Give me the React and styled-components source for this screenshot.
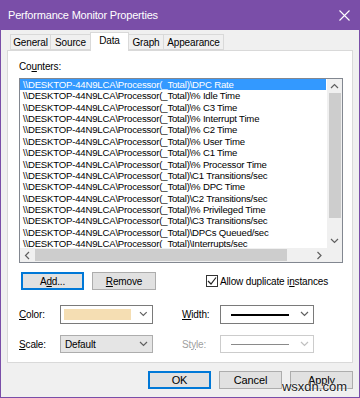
import React from 'react';
import styled, { createGlobalStyle } from 'styled-components';

const Global = createGlobalStyle`
    html, body { margin: 0; padding: 0; background: #f0f0f0; }
    * { box-sizing: border-box; }
`

const FONT = `"Liberation Sans", Arial, sans-serif`;

const Window = styled.div`
    position: relative;
    width: 360px;
    height: 398px;
    background: #f0f0f0;
    border: 1px solid #7a4ea8;
    border-top: none;
    font-family: ${FONT};
    font-size: 10px;
    letter-spacing: -0.15px;
    color: #000;
    display: flex;
    flex-direction: column;
`

const TitleBar = styled.div`
    height: 30px;
    margin: 0 -1px;
    background: #7a4ea8;
    color: #fff;
    display: flex;
    align-items: center;
    justify-content: space-between;
    padding: 0 8px 0 8px;
    font-size: 11px;
    letter-spacing: -0.2px;
`

const Close = styled.svg`
    width: 11px;
    height: 11px;
    margin-right: 2px;
`

const Tabs = styled.div`
    display: flex;
    align-items: flex-end;
    height: 20px;
    padding-left: 10px;
    position: relative;
    z-index: 1;
`

const Tab = styled.div`
    width: ${p => p.$w}px;
    height: ${p => (p.$active ? '19px' : '16px')};
    margin-bottom: ${p => (p.$active ? '-1px' : '0')};
    background: ${p => (p.$active ? '#fff' : '#f0f0f0')};
    border: 1px solid #d9d9d9;
    border-bottom: ${p => (p.$active ? 'none' : '1px solid #d9d9d9')};
    margin-left: -1px;
    display: flex;
    justify-content: center;
    align-items: ${p => (p.$active ? 'flex-start' : 'center')};
    padding-top: ${p => (p.$active ? '2px' : '0')};
    color: #000;
`

const Panel = styled.div`
    margin: 0 6px;
    height: 313px;
    background: #fff;
    border: 1px solid #d9d9d9;
    padding: 9px 9px 0 11px;
    display: flex;
    flex-direction: column;
`

const Label = styled.div`
    height: 13px;
    line-height: 13px;
    white-space: nowrap;
    color: ${p => (p.$disabled ? '#a0a0a0' : '#000')};
    u { text-decoration: underline; }
`

const ListBox = styled.div`
    margin-top: 5px;
    width: 324px;
    height: 185px;
    border: 1px solid #828790;
    display: grid;
    grid-template-columns: 1fr 15px;
    grid-template-rows: 1fr 14px;
    overflow: hidden;
`

const Rows = styled.div`
    overflow: hidden;
    min-height: 0;
`

const Row = styled.div`
    height: 11.36px;
    line-height: 11.36px;
    padding-left: 3px;
    white-space: nowrap;
    font-size: 9.6px;
    letter-spacing: -0.2px;
    background: ${p => (p.$selected ? '#3399ff' : 'transparent')};
    color: ${p => (p.$selected ? '#fff' : '#000')};
    margin-right: 1px;
`

const VScroll = styled.div`
    background: #f0f0f0;
    display: flex;
    flex-direction: column;
    align-items: center;
    min-height: 0;
`

const Arrow = styled.div`
    height: 14px;
    width: ${p => p.$w || 15}px;
    flex: none;
    display: flex;
    align-items: center;
    justify-content: center;
`

const VThumb = styled.div`
    width: 12px;
    height: 125px;
    background: #cdcdcd;
`

const HScroll = styled.div`
    background: #f0f0f0;
    display: flex;
    align-items: center;
`

const HThumb = styled.div`
    height: 12px;
    width: 252px;
    background: #cdcdcd;
`

const Spacer = styled.div`
    flex: 1;
`

const Corner = styled.div`
    background: #f0f0f0;
`

const ButtonRow = styled.div`
    margin-top: 9px;
    display: flex;
    align-items: center;
    height: 18px;
`

const Button = styled.div`
    width: ${p => p.$w || 64}px;
    height: ${p => p.$h || 18}px;
    margin-left: ${p => p.$ml || 0}px;
    background: #e1e1e1;
    border: 1px solid ${p => (p.$default ? '#0078d7' : '#adadad')};
    box-shadow: ${p => (p.$default ? 'inset 0 0 0 1px #0078d7' : 'none')};
    display: flex;
    align-items: center;
    justify-content: center;
    color: #000;
    font-size: ${p => p.$fs || 10}px;
`

const Check = styled.div`
    margin-left: 50px;
    display: flex;
    align-items: center;
    gap: 2px;
    white-space: nowrap;
`

const Box = styled.div`
    width: 12px;
    height: 12px;
    border: 1px solid #333;
    background: #fff;
    display: flex;
    align-items: center;
    justify-content: center;
`

const Grid = styled.div`
    margin-top: 15px;
    display: grid;
    grid-template-columns: 41px 93px 29px 38px 94px;
    grid-template-rows: 19px 18px;
    row-gap: 11px;
    align-items: center;
`

const Combo = styled.div`
    height: 100%;
    border: 1px solid ${p => (p.$disabled ? '#cccccc' : p.$flat ? '#adadad' : '#7a7a7a')};
    background: ${p => (p.$flat ? '#e5e5e5' : '#fff')};
    display: flex;
    align-items: center;
    padding-left: ${p => (p.$flat ? '4px' : '3px')};
    padding-right: 4px;
    gap: 4px;
`

const Swatch = styled.div`
    width: 70px;
    height: 11px;
    background: #f5deb3;
`

const LineSample = styled.div`
    flex: 1;
    display: flex;
    justify-content: center;
    div {
        width: 58px;
        height: ${p => (p.$thick ? '2px' : '1px')};
        background: ${p => (p.$disabled ? '#8a8a8a' : '#000')};
    }
`

const ComboText = styled.div`
    flex: 1;
    color: #000;
`

const Footer = styled.div`
    display: flex;
    justify-content: flex-end;
    gap: 8px;
    padding: 8px 6px 0 0;
`

const Watermark = styled.div`
    position: absolute;
    right: 12px;
    bottom: 3px;
    font-family: ${FONT};
    font-size: 13px;
    letter-spacing: 0;
    color: #222;
    text-shadow: 0 0 2px #fff, 0 0 2px #fff;
`

const Chevron = ({ dir = 'down', color = '#606060' }) => {
    const d = {
        down: 'M1 2 L4.5 5.5 L8 2',
        up: 'M1 6 L4.5 2.5 L8 6',
        left: 'M6 1 L2.5 4.5 L6 8',
        right: 'M2.5 1 L6 4.5 L2.5 8',
    }[dir];
    return (
        <svg width="9" height="9" viewBox="0 0 9 9">
            <path d={d} fill="none" stroke={color} strokeWidth="1.2" />
        </svg>
    );
};

const items = [
    'DPC Rate', '% Idle Time', '% C3 Time', '% Interrupt Time', '% C2 Time',
    '% User Time', '% C1 Time', '% Processor Time', 'C1 Transitions/sec',
    '% DPC Time', 'C2 Transitions/sec', '% Privileged Time', 'C3 Transitions/sec',
    'DPCs Queued/sec', 'Interrupts/sec',
];

const tabs = [['General', 41], ['Source', 41], ['Data', 39], ['Graph', 36], ['Appearance', 61]];

const App = () => {
    return (
        <>
            <Global />
            <Window>
                <TitleBar>
                    <span>Performance Monitor Properties</span>
                    <Close viewBox="0 0 11 11">
                        <path d="M0.5 0.5 L10.5 10.5 M10.5 0.5 L0.5 10.5" stroke="#fff" strokeWidth="1.1" />
                    </Close>
                </TitleBar>
                <Tabs>
                    {tabs.map(([t, w]) => (
                        <Tab key={t} $w={w} $active={t === 'Data'}>{t}</Tab>
                    ))}
                </Tabs>
                <Panel>
                    <Label>Co<u>u</u>nters:</Label>
                    <ListBox>
                        <Rows>
                            {items.map((it, i) => (
                                <Row key={it} $selected={i === 0}>
                                    {`\\\\DESKTOP-44N9LCA\\Processor(_Total)\\${it}`}
                                </Row>
                            ))}
                        </Rows>
                        <VScroll>
                            <Arrow><Chevron dir="up" /></Arrow>
                            <VThumb />
                            <Spacer />
                            <Arrow><Chevron dir="down" /></Arrow>
                        </VScroll>
                        <HScroll>
                            <Arrow><Chevron dir="left" /></Arrow>
                            <HThumb />
                            <Spacer />
                            <Arrow><Chevron dir="right" /></Arrow>
                        </HScroll>
                        <Corner />
                    </ListBox>
                    <ButtonRow>
                        <Button $default $w={63} $ml={2}>A<u>d</u>d...</Button>
                        <Button $w={64} $ml={8}><u>R</u>emove</Button>
                        <Check>
                            <Box>
                                <svg width="10" height="10" viewBox="0 0 10 10">
                                    <path d="M1 5 L4 8 L9 1.5" fill="none" stroke="#222" strokeWidth="1.2" />
                                </svg>
                            </Box>
                            <span>Allow duplicate i<u>n</u>stances</span>
                        </Check>
                    </ButtonRow>
                    <Grid>
                        <Label><u>C</u>olor:</Label>
                        <Combo>
                            <Swatch />
                            <Spacer />
                            <Chevron />
                        </Combo>
                        <div />
                        <Label><u>W</u>idth:</Label>
                        <Combo>
                            <LineSample $thick><div /></LineSample>
                            <Chevron />
                        </Combo>
                        <Label><u>S</u>cale:</Label>
                        <Combo $flat>
                            <ComboText>Default</ComboText>
                            <Chevron />
                        </Combo>
                        <div />
                        <Label $disabled>St<u>y</u>le:</Label>
                        <Combo $disabled>
                            <LineSample $disabled><div /></LineSample>
                            <Chevron color="#c0c0c0" />
                        </Combo>
                    </Grid>
                </Panel>
                <Footer>
                    <Button $default $w={63} $fs={11}>OK</Button>
                    <Button $w={63} $fs={11}>Cancel</Button>
                    <Button $w={63} $fs={11}>Apply</Button>
                </Footer>
                <Watermark>wsxdn.com</Watermark>
            </Window>
        </>
    );
};

export default App;
